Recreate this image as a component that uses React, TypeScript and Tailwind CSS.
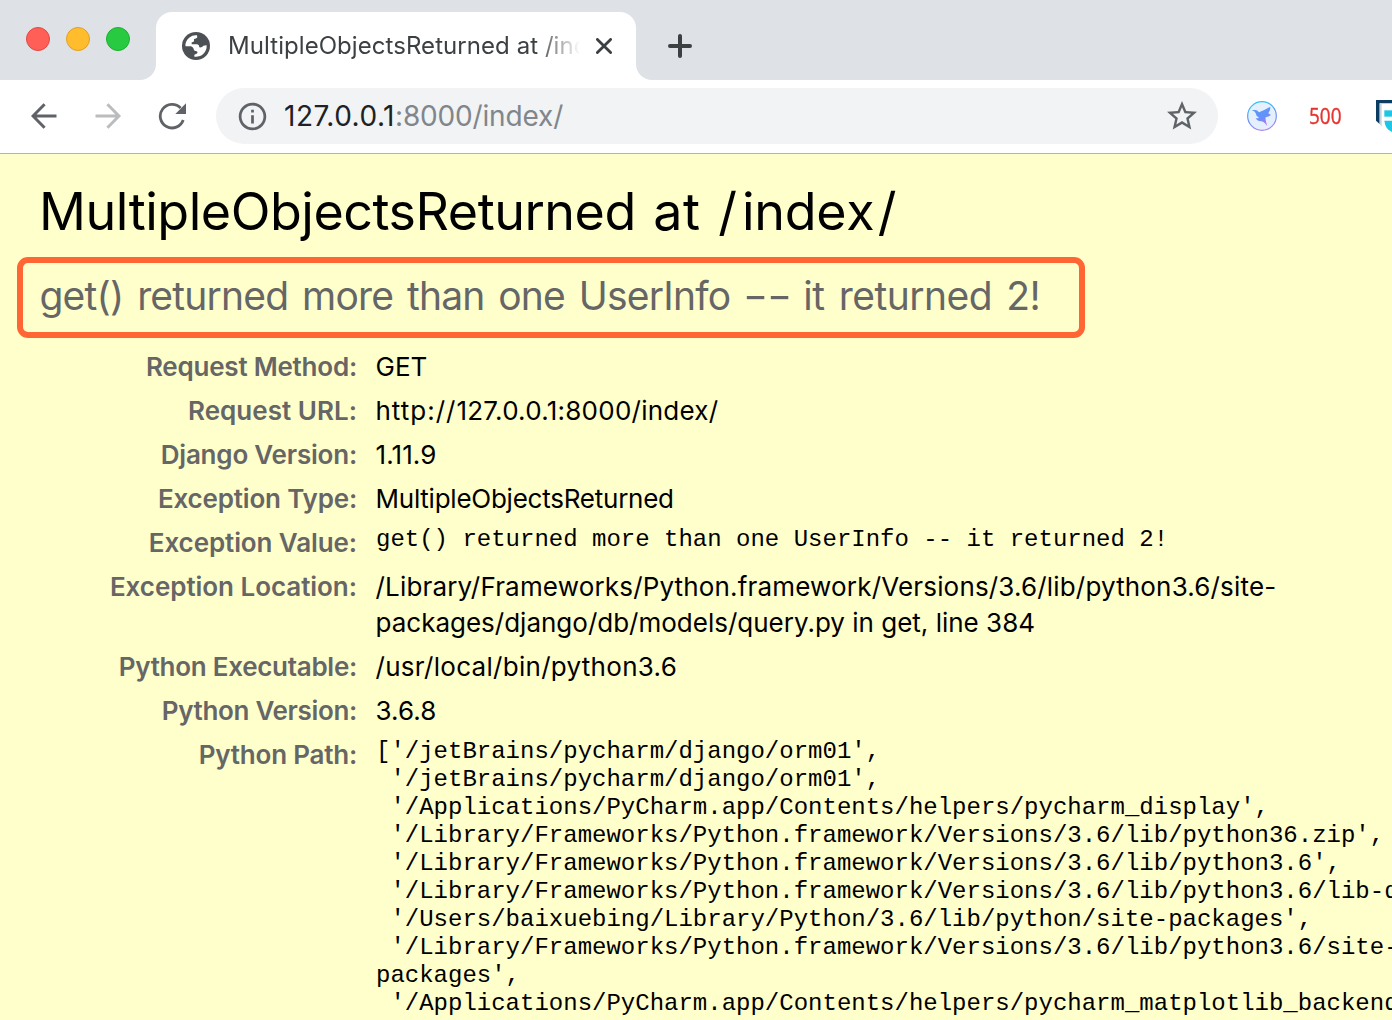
import React from 'react';
import { MdInfoOutline, MdStarBorder } from 'react-icons/md';

function GlobeIcon() {
  return (
    <svg viewBox="0 0 84 84" className="size-7 shrink-0">
      <circle cx="42" cy="42" r="42" fill="#4d5156" />
      <path
        d="M10 39 A32 32 0 0 1 45 10 L46 16 Q43 21 36 21 L36 27 Q35 31 29 31 L29 37 L46 37 Q52 38 52 46 Q61 47 64 41 L74 40 A32 32 0 0 1 37 74 L37 68 Q46 67 47 61 Q46 56 38 56 Q35 55 35 50 Q33 45 27 43 L11 43 Z"
        fill="#fff"
      />
    </svg>
  );
}

function ArrowIcon({ className }: { className: string }) {
  return (
    <svg viewBox="0 0 26 26" className={className} fill="none" stroke="currentColor" strokeWidth="3">
      <path d="M25.5 13H2.5M13.6 1.2 2 13l11.6 11.8" />
    </svg>
  );
}

function ReloadIcon() {
  return (
    <svg viewBox="0 0 28 28" className="ml-[37px] size-7 shrink-0 text-[#5f6368]" fill="none">
      <path d="M25.2 18A11.8 11.8 0 1 1 22.6 6" stroke="currentColor" strokeWidth="2.8" />
      <path d="M28 1.3V12H17.3Z" fill="currentColor" />
    </svg>
  );
}

function CloseIcon() {
  return (
    <svg viewBox="0 0 16 16" className="size-4 shrink-0 text-[#3c4043]" stroke="currentColor" strokeWidth="2.8" strokeLinecap="round">
      <path d="M1.4 1.4l13.2 13.2M14.6 1.4L1.4 14.6" />
    </svg>
  );
}

function PlusIcon() {
  return (
    <svg viewBox="0 0 24 24" className="size-6 text-[#3c4043]" stroke="currentColor" strokeWidth="4" strokeLinecap="round">
      <path d="M12 2v20M2 12h20" />
    </svg>
  );
}

function BirdIcon() {
  return (
    <svg viewBox="0 0 90 90" className="size-[30px] shrink-0">
      <defs>
        <linearGradient id="ring" x1="0.3" y1="0" x2="0.6" y2="1">
          <stop offset="0" stopColor="#29c9f7" />
          <stop offset="0.5" stopColor="#5b93f8" />
          <stop offset="1" stopColor="#b184f0" />
        </linearGradient>
        <linearGradient id="bird" x1="0.2" y1="0" x2="0.6" y2="1">
          <stop offset="0" stopColor="#559df9" />
          <stop offset="0.6" stopColor="#6690fa" />
          <stop offset="1" stopColor="#b873ee" />
        </linearGradient>
      </defs>
      <circle cx="45" cy="45" r="43" fill="#e6f0fd" stroke="url(#ring)" strokeWidth="3.5" />
      <path
        d="M14 27 L23 27 Q29 25 36 34 Q50 28 70 17 Q71 28 64 37 L72 42 Q65 48 56 49 Q54 56 61 75 Q51 61 42 61 Q31 61 26 51 Q33 53 36 50 Q27 46 26 37 Q25 31 14 27Z"
        fill="url(#bird)"
      />
    </svg>
  );
}

function ShieldIcon() {
  return (
    <svg viewBox="0 0 48 96" className="h-8 w-4 shrink-0">
      <path d="M0 0H48V10H11V72L0 62Z" fill="#0b3d63" />
      <path d="M11 10H17V80L11 72Z" fill="#c9d3dc" />
      <path d="M25 31H48V50H25Z" fill="#1cc6e6" />
      <path d="M25 62H48V96Q28 88 25 62Z" fill="#1cc6e6" />
    </svg>
  );
}

function TabStrip() {
  return (
    <div className="flex h-20 bg-white">
      <div className="flex w-[156px] shrink-0 gap-4 rounded-br-2xl bg-[#dee1e6] pt-[27px] pl-[26px]">
        <span className="size-6 rounded-full border border-[#e2483f] bg-[#ff5f57]" />
        <span className="size-6 rounded-full border border-[#e0a028] bg-[#ffbd2e]" />
        <span className="size-6 rounded-full border border-[#1faf2f] bg-[#28ca41]" />
      </div>
      <div className="h-10 w-[480px] shrink-0 bg-[#dee1e6] pt-3">
        <div className="flex h-[68px] items-center rounded-t-2xl bg-white pl-[26px]">
          <GlobeIcon />
          <div className="ml-[18px] w-[352px] overflow-hidden [mask-image:linear-gradient(to_right,#000_308px,transparent_352px)]">
            <span className="block text-2xl leading-[30px] tracking-[0.06px] whitespace-nowrap text-[#3c4043]">
              MultipleObjectsReturned at /index/
            </span>
          </div>
          <span className="ml-4">
            <CloseIcon />
          </span>
        </div>
      </div>
      <div className="flex-1 rounded-bl-2xl bg-[#dee1e6] pt-[34px] pl-8">
        <PlusIcon />
      </div>
    </div>
  );
}

function Toolbar() {
  return (
    <div className="flex h-[74px] items-center border-b border-[#b3b3b3] bg-white pb-px">
      <ArrowIcon className="ml-[31px] size-[26px] shrink-0 text-[#5f6368]" />
      <ArrowIcon className="ml-[38px] size-[26px] shrink-0 rotate-180 text-[#babcbe]" />
      <ReloadIcon />
      <div className="ml-[30px] flex h-14 w-[1002px] shrink-0 items-center rounded-full bg-[#f1f3f4] pl-5">
        <MdInfoOutline className="size-[33px] shrink-0 text-[#5f6368]" />
        <div className="ml-[15px] text-[28px] leading-9 whitespace-nowrap">
          <span className="tracking-[0.5px] text-[#202124]">127.0.0.1</span>
          <span className="tracking-[-0.16px] text-[#80868b]">:8000/index/</span>
        </div>
        <MdStarBorder className="mr-[18px] ml-auto size-9 shrink-0 text-[#5f6368]" />
      </div>
      <div className="ml-[29px] flex shrink-0 items-center">
        <BirdIcon />
        <div className="ml-8 w-[34px]">
          <span className="block origin-left scale-x-[0.88] font-['Open_Sans'] text-[21.5px] leading-7 font-medium text-[#e53530] [-webkit-text-stroke:0.4px_#e53530]">
            500
          </span>
        </div>
      </div>
      <div className="ml-[33px]">
        <ShieldIcon />
      </div>
    </div>
  );
}

function Row({ label, labelClass, children }: { label: string; labelClass: string; children: React.ReactNode }) {
  return (
    <div className="flex gap-[18.5px] py-1">
      <div className="w-[357px] shrink-0 text-right text-[26px] leading-9 font-semibold text-[#666]">
        <span className={labelClass}>{label}</span>
      </div>
      <div className="text-[26px] leading-9 whitespace-pre">{children}</div>
    </div>
  );
}

const MONO = "pt-px pl-[0.5px] font-['Liberation_Mono',monospace] text-2xl leading-7";

const PATHS = `['/jetBrains/pycharm/django/orm01',
 '/jetBrains/pycharm/django/orm01',
 '/Applications/PyCharm.app/Contents/helpers/pycharm_display',
 '/Library/Frameworks/Python.framework/Versions/3.6/lib/python36.zip',
 '/Library/Frameworks/Python.framework/Versions/3.6/lib/python3.6',
 '/Library/Frameworks/Python.framework/Versions/3.6/lib/python3.6/lib-dynload',
 '/Users/baixuebing/Library/Python/3.6/lib/python/site-packages',
 '/Library/Frameworks/Python.framework/Versions/3.6/lib/python3.6/site-
packages',
 '/Applications/PyCharm.app/Contents/helpers/pycharm_matplotlib_backend']`;

export default function App() {
  return (
    <div className="h-[1020px] w-[1392px] overflow-hidden bg-[#ffffcc] font-['Inter',sans-serif] text-black">
      <TabStrip />
      <Toolbar />
      <main className="pt-[27px]">
        <h1 className="pl-[39px] text-[52px] leading-[62px] whitespace-nowrap">
          <span className="tracking-[-0.47px]">MultipleObjectsReturned</span>
          <span className="ml-[2.5px] tracking-[0.4px]"> at</span>
          <span className="ml-[2px] tracking-[1.2px]"> </span>
          <span className="tracking-[5px]">/</span>
          <span className="tracking-[-0.3px]">inde</span>
          <span className="tracking-[3px]">x</span>
          <span>/</span>
        </h1>
        <h2 className="mt-[14px] ml-[17px] h-[81px] w-[1068px] rounded-[11px] border-[6px] border-[#ff6633] pt-[10px] pl-[16.5px] text-[39px] leading-[46px] tracking-[-0.8px] whitespace-nowrap text-[#666] [word-spacing:3.6px]">
          get() returned more than one UserInfo{' '}
          <span className="mr-[12px] -ml-px inline-block origin-left scale-x-[1.4]">--</span>
          <span className="tracking-[-0.5px]"> it returned 2!</span>
        </h2>
        <section className="mt-[7px]">
          <Row label="Request Method:" labelClass="tracking-[-0.22px]">
            <span>GET</span>
          </Row>
          <Row label="Request URL:" labelClass="tracking-[0.03px]">
            <span className="tracking-[1px]">http://</span>
            <span className="tracking-[0.25px]">127.0.0.1:8000/index/</span>
          </Row>
          <Row label="Django Version:" labelClass="tracking-[-0.2px]">
            <span className="tracking-[0.1px]">1.11.9</span>
          </Row>
          <Row label="Exception Type:" labelClass="tracking-[-0.18px]">
            <span className="tracking-[-0.24px]">MultipleObjectsReturned</span>
          </Row>
          <Row label="Exception Value:" labelClass="tracking-[-0.1px]">
            <div className={MONO}>get() returned more than one UserInfo -- it returned 2!</div>
          </Row>
          <Row label="Exception Location:" labelClass="tracking-[-0.04px]">
            <div className="tracking-[0.17px]">
              /Library/Frameworks/Python.framework/Versions/3.6/lib/python3.6/site-
            </div>
            <div>packages/django/db/models/query.py in get, line 384</div>
          </Row>
          <Row label="Python Executable:" labelClass="tracking-[-0.28px]">
            <span className="tracking-[0.29px]">/usr/local/bin/python3.6</span>
          </Row>
          <Row label="Python Version:" labelClass="tracking-[-0.33px]">
            <span className="tracking-[0.1px]">3.6.8</span>
          </Row>
          <Row label="Python Path:" labelClass="tracking-[-0.22px]">
            <div className={MONO}>{PATHS}</div>
          </Row>
        </section>
      </main>
    </div>
  );
}
